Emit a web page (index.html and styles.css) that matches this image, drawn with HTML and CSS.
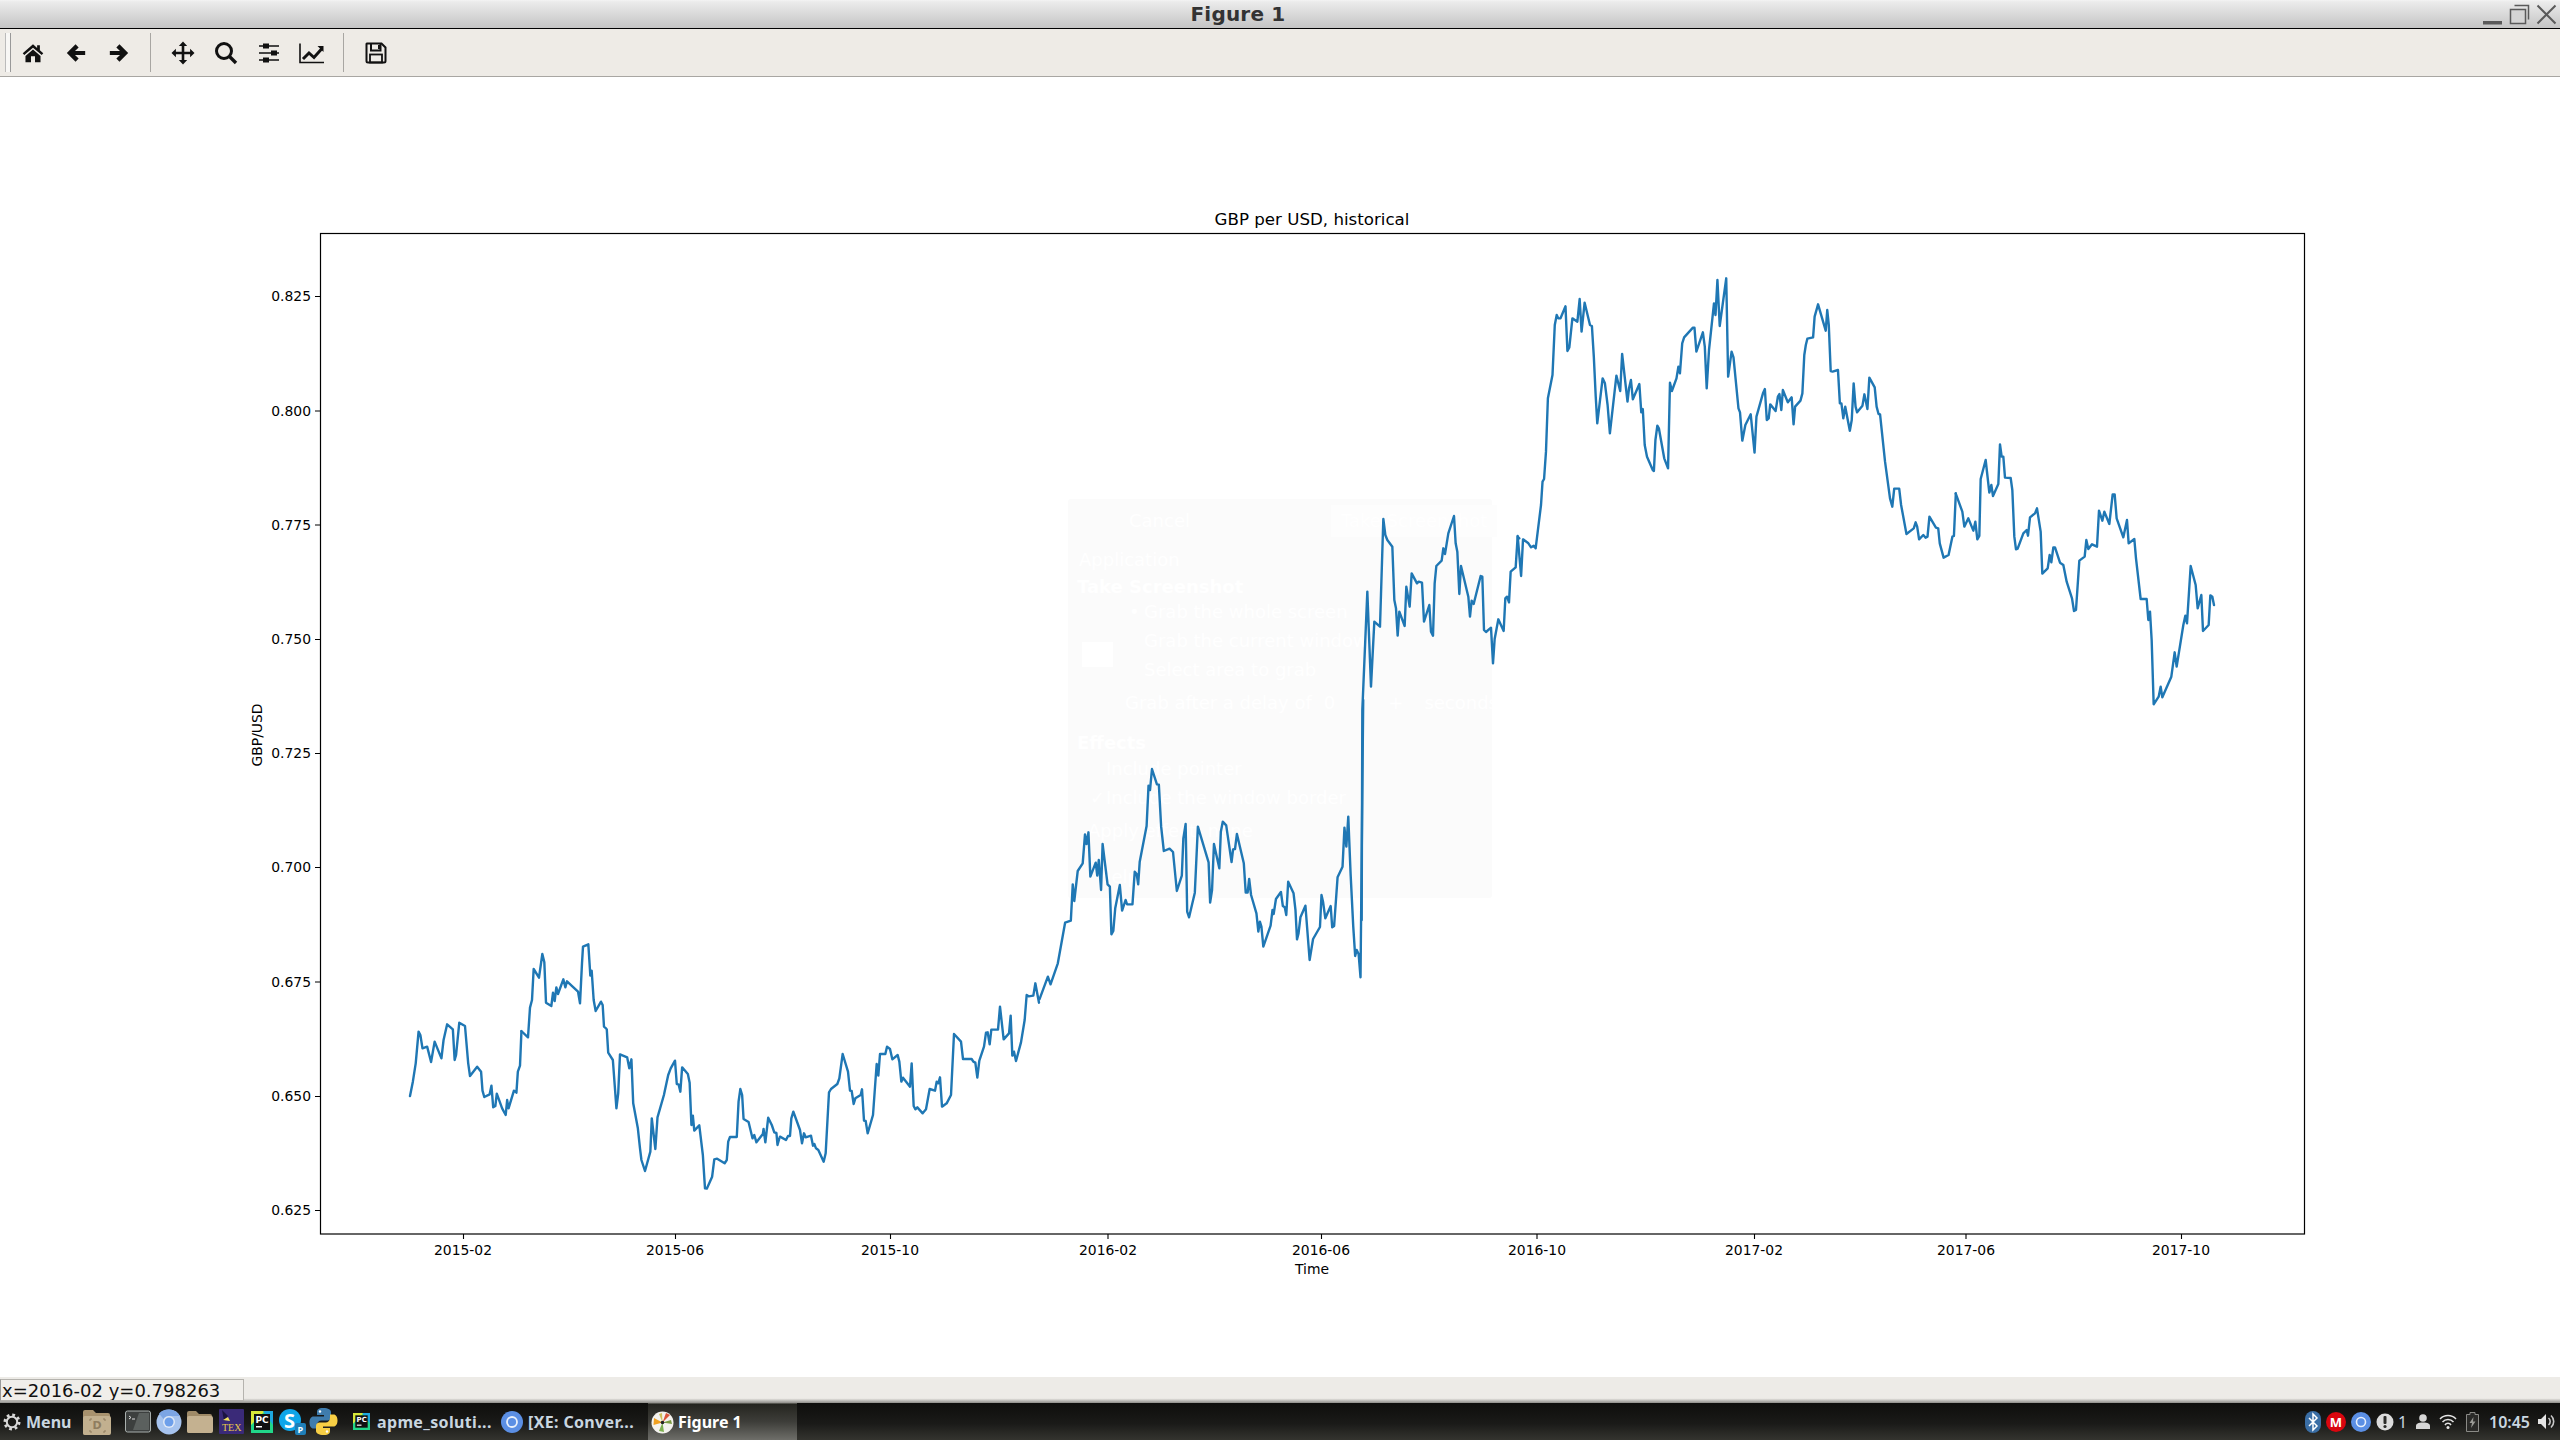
FILE: index.html
```html
<!DOCTYPE html>
<html lang="en">
<head>
<meta charset="utf-8">
<title>Figure 1</title>
<link rel="stylesheet" href="styles.css">
</head>
<body>
<div class="window">
  <header class="titlebar">
    <div class="title">Figure 1</div>
    <svg class="winbtns" width="84" height="28" viewBox="0 0 84 28">
      <rect x="7" y="21" width="19" height="3.5" fill="#5a5a5a"/>
      <path d="M38.5 5.5H52.5V19.5" class="wb"/>
      <rect x="34.5" y="9.5" width="15" height="14" class="wb wbf"/>
      <path d="M61.5 5.5L79.5 23.5M79.5 5.5L61.5 23.5" class="wb wbx"/>
    </svg>
  </header>

  <nav class="toolbar">
    <div class="handle"></div>
    <div class="tool"><svg width="22" height="22" viewBox="0 0 24 24"><path d="M12 2.5L.8 12.3l1.7 2L12 6.2l9.5 8.1 1.7-2-3.7-3.2V3.6h-3v3L12 2.5z"/><path d="M12 8.2L3.8 15.2V22h6v-6.5h4.4V22h6v-6.8L12 8.2z"/></svg></div>
    <div class="tool"><svg width="22" height="22" viewBox="0 0 24 24"><path d="M2 12L11.5 2.5l3.4 3.4-4 4H22v4.2H10.9l4 4-3.4 3.4L2 12z"/></svg></div>
    <div class="tool"><svg width="22" height="22" viewBox="0 0 24 24"><path d="M22 12L12.5 2.5 9.1 5.9l4 4H2v4.2h11.1l-4 4 3.4 3.4L22 12z"/></svg></div>
    <div class="sep"></div>
    <div class="tool"><svg width="24" height="24" viewBox="0 0 24 24"><path d="M12 .5l4.2 4.4h-2.9v5.8h5.8V7.800l4.400 4.200-4.400 4.200v-2.900h-5.800v5.800h2.900L12 23.500l-4.200-4.400h2.900v-5.800H4.900v2.900L.5 12l4.400-4.200v2.900h5.800V4.900H7.800L12 .5z"/></svg></div>
    <div class="tool"><svg width="24" height="24" viewBox="0 0 24 24"><circle cx="10" cy="10" r="7.500" fill="none" stroke="#111" stroke-width="3"/><path d="M15.500 15.500L22 22" stroke="#111" stroke-width="3.400" fill="none"/></svg></div>
    <div class="tool"><svg width="24" height="24" viewBox="0 0 24 24"><path d="M2 5h20M2 12h20M2 19h20" stroke="#111" stroke-width="1.600" fill="none"/><rect x="6" y="2.500" width="6" height="5"/><rect x="14" y="9.500" width="6" height="5"/><rect x="6" y="16.500" width="6" height="5"/></svg></div>
    <div class="tool"><svg width="26" height="24" viewBox="0 0 26 24"><path d="M1 2.500V21.500H25" stroke="#111" stroke-width="1.600" fill="none"/><path d="M4 18l6-6 5 4.500 8-9" stroke="#111" stroke-width="3" fill="none"/><path d="M18.500 5h6v6z"/></svg></div>
    <div class="sep"></div>
    <div class="tool"><svg width="22" height="22" viewBox="0 0 22 22"><path d="M2 1.500H16.500L20.500 5.500V19a1.500 1.500 0 0 1-1.500 1.500H3A1.500 1.500 0 0 1 1.500 19V2z" fill="none" stroke="#111" stroke-width="2"/><path d="M6 2v6.500H15.500V2M14 3v4" fill="none" stroke="#111" stroke-width="2"/><rect x="5" y="12.500" width="12" height="8" fill="none" stroke="#111" stroke-width="1.800"/></svg></div>
  </nav>

  <main class="figure">
    <section class="ghost">
      <div class="ghost-row ghost-actions"><span class="gh-cancel">Cancel</span><span class="gh-primary">Take Screenshot</span></div>
      <div class="ghost-row ghost-app">Application</div>
      <div class="ghost-row ghost-head">Take Screenshot</div>
      <div class="ghost-row ghost-opt"><span class="gh-mark">•</span>Grab the whole screen</div>
      <div class="ghost-row ghost-opt"><span class="gh-mark"></span>Grab the current window</div>
      <div class="ghost-row ghost-opt"><span class="gh-mark"></span>Select area to grab</div>
      <div class="ghost-row ghost-delay"><span>Grab after a delay of</span><span class="gh-zero">0</span><span class="gh-plus">+</span><span>seconds</span></div>
      <div class="ghost-row ghost-head">Effects</div>
      <div class="ghost-row ghost-check"><span class="gh-tick"></span>Include pointer</div>
      <div class="ghost-row ghost-check"><span class="gh-tick">✓</span>Include the window border</div>
      <div class="ghost-row ghost-apply">Apply effect: none</div>
      <div class="ghost-row ghost-help">Help</div>
      <div class="ghost-icon"></div>
    </section>
    <svg class="plot" width="2560" height="1300" viewBox="0 77 2560 1300">
      <g class="tick">
        <path d="M320 1210.500h-5M320 1096.500h-5M320 982h-5M320 867.500h-5M320 753.500h-5M320 639.500h-5M320 525h-5M320 411h-5M320 296.500h-5"/>
        <path d="M463.500 1234v5M675.500 1234v5M890.500 1234v5M1108 1234v5M1321.500 1234v5M1537 1234v5M1754.500 1234v5M1966 1234v5M2181.500 1234v5"/>
      </g>
      <g class="ylab">
        <text x="311" y="1215">0.625</text>
        <text x="311" y="1101">0.650</text>
        <text x="311" y="987">0.675</text>
        <text x="311" y="872">0.700</text>
        <text x="311" y="758">0.725</text>
        <text x="311" y="644">0.750</text>
        <text x="311" y="530">0.775</text>
        <text x="311" y="416">0.800</text>
        <text x="311" y="301">0.825</text>
      </g>
      <g class="xlab">
        <text x="463" y="1255">2015-02</text>
        <text x="675" y="1255">2015-06</text>
        <text x="890" y="1255">2015-10</text>
        <text x="1108" y="1255">2016-02</text>
        <text x="1321" y="1255">2016-06</text>
        <text x="1537" y="1255">2016-10</text>
        <text x="1754" y="1255">2017-02</text>
        <text x="1966" y="1255">2017-06</text>
        <text x="2181" y="1255">2017-10</text>
        <text x="1312" y="1274">Time</text>
      </g>
      <text class="ptitle" x="1312" y="224.500">GBP per USD, historical</text>
      <text class="ylabel" transform="translate(262 735) rotate(-90)">GBP/USD</text>
      <g class="curve">
        <g transform="translate(220 1000) scale(.35714 .33333)"><polyline points="532,288 540,245 548,190 556,95 561,105 567,145 580,140 591,186 601,125 620,175 626,120 636,73 652,88 657,180 661,165 670,68 686,78 695,190 700,228 720,200 731,215 735,272 740,291 755,283 760,257 765,322 771,318 775,281 790,325 800,345 804,300 808,325 823,272 830,278 834,215 840,197 844,94"/></g>
        <g transform="translate(500 930) scale(.33333)"><polyline points="64,303 84,322 90,233 96,210 101,117 117,143 127,72 133,97 138,218 154,228 159,188 164,213 169,172 174,192 190,148 196,172 201,154 234,185 240,220 246,100 249,50 265,43 271,137 275,122 281,210 287,243 303,215 308,225 312,290 318,295"/></g>
        <g transform="translate(220 1000) scale(.35714 .33333)"><polyline points="1083,88 1087,158 1100,180 1110,325 1115,280 1120,163 1140,172 1146,205 1152,178 1157,310 1170,385 1176,445 1180,480 1190,513 1205,455 1209,355 1219,447 1225,352 1243,285 1255,225 1262,205 1274,182 1279,252 1284,253 1289,275 1294,202 1310,222 1315,248 1320,375 1324,347 1328,392 1342,376 1352,465 1358,565 1363,566 1378,530 1384,478 1392,476 1413,490 1419,480 1423,425 1428,411 1447,411 1452,305 1457,267 1462,285 1466,357 1480,366 1491,415 1496,405 1502,427 1520,402 1522,387 1527,427 1535,353 1545,375 1552,397 1558,399 1561,435 1566,415"/></g>
        <g transform="translate(780 980) scale(.33333)"><polyline points="0,470 18,480 24,468 30,468 34,415 40,395 60,450 66,490 72,460 77,472 93,467 99,497 103,492 108,505 115,510 131,545 137,520 147,337 153,327 172,312 178,295 188,222 204,275 210,332 215,333 221,372 226,355 242,345 246,328 252,422 257,423 263,460 279,405 290,252 295,287 300,222 316,222 321,200 330,207 337,238 353,225 358,245 364,305 369,293 390,320 395,250 401,378 406,388 412,382 428,400 438,388 449,327 465,332 470,305 475,310 480,292 486,380 500,370 513,345 522,162 543,185 549,237 575,237 580,245 586,248 592,293 598,242 612,200 618,158 623,157 629,193 634,149 654,149 660,80 671,178 687,160 692,107 697,227 702,215 708,243 723,187 734,120 740,45 746,49 760,47 766,10 777,68"/></g>
        <g transform="translate(780 700) scale(.38268 .33333)"><polyline points="678,898 700,830 707,853 726,790 745,668 760,662 765,553 769,603 778,513 791,490 797,403 801,432 806,397 811,530 825,488 829,527 833,480 839,570 843,432 856,553 862,560 866,703 871,693 876,625 888,555 894,632 903,600 907,613 921,613 927,515 932,522 936,553 940,485 958,378 963,257 967,270 972,207 985,253 990,254 996,380 1003,453 1018,446 1027,456 1037,573 1050,527 1054,415 1060,372 1064,635 1069,652 1084,578 1092,380 1120,487 1124,608 1129,570 1134,432 1148,505 1152,395 1157,365 1166,376 1180,486 1184,448 1189,447 1194,402 1212,490 1217,578 1222,578 1226,537 1231,585 1245,640 1250,695 1254,665 1258,680 1263,740 1282,677 1287,630 1290,642 1296,597 1309,576 1314,618 1319,622 1323,645 1328,545 1342,580 1347,630 1351,718 1355,700 1360,652 1373,617 1384,780 1393,717 1411,681 1415,585 1419,605 1425,655 1439,618 1443,682 1448,678 1457,532 1470,500 1475,383 1480,440 1485,350 1491,520 1498,680 1503,768 1507,750 1512,762 1517,832 1524,0"/></g>
        <g transform="translate(1050 480) scale(.33333)"><polyline points="935,1320 937,690 952,335 963,620 973,425 990,440 1000,117 1006,165 1012,180 1027,200 1033,360 1038,385 1043,467 1048,395 1064,438 1069,320 1079,380 1085,280 1101,310 1106,305 1116,308 1122,425 1138,375 1143,455 1149,467 1154,310 1159,258 1175,242 1180,205 1185,222 1195,160 1212,108 1217,190 1222,215 1228,342 1233,258 1255,350 1260,410 1265,362 1271,372 1292,288 1297,290 1302,450 1308,456 1323,443 1329,550 1334,477 1345,418 1361,453 1366,355 1371,350 1377,367 1382,275 1397,262 1403,170 1408,175"/></g>
        <g transform="translate(1360 260) scale(.38268 .33333)"><polyline points="412,828 421,948 426,838 440,850 447,862 454,857 459,865 473,735 477,665 481,657 486,575 491,415 503,345 509,195 514,165 518,175 524,175 537,139 542,273 547,262 555,175 568,185 574,117 579,215 587,128 601,195 606,198 611,290 616,410 620,490 634,355 640,370 647,435 653,520 670,347 680,393 685,282 699,425 703,385 708,360 713,418 730,372 735,457 739,447 744,555 750,590 765,630 768,633 772,540 777,497 781,505 795,595 805,625 810,368 815,393 827,355 832,320 836,340 842,250 847,232 870,203 874,203 879,275 896,217 901,260 906,385 912,270 925,130 929,165 934,60 940,198 957,55 962,350 971,275 976,292 989,445 993,457 999,542 1007,495 1021,463 1031,578 1036,470 1053,400 1058,387 1063,480 1068,475 1072,433 1086,453 1092,410 1096,402 1101,450 1105,390 1118,427 1128,412 1133,493 1137,440 1151,422 1156,400 1161,285 1165,255 1169,236 1184,232 1188,170 1197,133 1217,212 1221,150 1225,195 1230,333 1235,335 1249,330 1254,430 1258,430 1263,475 1268,440 1280,512 1285,480 1290,370 1295,440 1299,457 1313,437 1318,403 1326,447 1331,353 1345,382 1350,440 1355,462 1359,463 1372,605 1385,715 1391,740 1396,686 1409,686 1414,735 1428,822 1447,805 1452,787 1456,800 1461,838 1472,825 1478,833 1483,830 1488,770 1505,803 1511,805 1515,850 1525,893 1538,885 1548,830 1552,828 1557,700"/></g>
        <g transform="translate(1800 260) scale(.33333)"><polyline points="467,700 487,755 493,800 505,775 520,812 526,785 532,838 538,828 542,657 557,600 568,698 574,675 579,708 595,672 600,553 605,590 610,590 615,653 632,654 637,690 643,830 648,868 653,866 670,820 680,810 684,827 690,772 705,760 711,745 722,815 727,941 743,925 749,885 754,907 760,862 765,862 780,908 790,915 800,965 816,1015 822,1053 828,1050 838,902 854,890 859,840 865,867 876,853 891,860 897,752 907,782 913,755 928,792 938,703 944,703 950,775 970,832 981,780 986,850 1003,837 1008,895 1022,1017 1040,1017 1045,1080 1050,1055 1055,1140 1061,1333 1076,1310 1082,1280 1087,1312 1114,1250 1124,1177 1130,1220 1150,1095 1156,1067 1161,1090 1172,918 1187,975 1193,1045 1204,1005 1209,1113 1226,1095 1231,1006 1237,1010 1242,1035"/></g>
      </g>
      <rect class="spine" x="320.500" y="233.500" width="1984" height="1000.500"/>
    </svg>
  </main>

  <div class="statusbar"><div class="coords">x=2016-02 y=0.798263</div></div>

  <footer class="taskbar">
    <div class="menu">
      <svg width="18" height="18" viewBox="0 0 18 18"><circle cx="9" cy="9" r="5.200" fill="none" stroke="#d8d8d8" stroke-width="2"/><circle cx="9" cy="9" r="7" fill="none" stroke="#d8d8d8" stroke-width="3" stroke-dasharray="2.700 2.800"/></svg>
      <span class="menu-text">Menu</span>
    </div>
    <div class="launchers">
      <svg class="l-folder" width="29" height="28" viewBox="0 0 29 28"><path d="M1 4q0-2 2-2h8l3 3h12q2 0 2 2v18q0 2-2 2H3q-2 0-2-2z" fill="#a8926e"/><rect x="1" y="8" width="28" height="19" rx="2" fill="#c2b08f"/><path d="M8 13v-2h2M21 11h2v2M8 22v2h2M21 24h2v-2" stroke="#8f7d5f" fill="none"/><text class="l-d" x="15" y="21">D</text></svg>
      <svg class="l-term" width="26" height="24" viewBox="0 0 26 24"><rect x=".5" y="1" width="25" height="21" rx="2" fill="#3c3f3e" stroke="#a9b0ae"/><path d="M14 3L24 3 24 20 8 20z" fill="#5b605e"/><path d="M4 6l2 1.500L4 9M7 9h3" stroke="#ddd" fill="none"/></svg>
      <svg class="l-chrome" width="26" height="26" viewBox="0 0 26 26"><circle cx="13" cy="13" r="12.500" fill="#a6c3ee"/><path d="M13 .5a12.500 12.500 0 0 1 11 6.500H13a6 6 0 0 0-5.500 3L3 4.500A12.500 12.500 0 0 1 13 .5z" fill="#7ca5e4"/><circle cx="13" cy="13" r="6" fill="#dfe8f6"/><circle cx="13" cy="13" r="4.500" fill="#6d9fea"/></svg>
      <svg class="l-folder2" width="27" height="24" viewBox="0 0 27 24"><path d="M1 3q0-2 2-2h7l3 3h11q2 0 2 2v15q0 2-2 2H3q-2 0-2-2z" fill="#9f8a67"/><rect x="1" y="6" width="26" height="17" rx="2" fill="#c4b190"/></svg>
      <svg class="l-tex" width="25" height="25" viewBox="0 0 25 25"><rect width="25" height="25" rx="1" fill="#3a2a78"/><path d="M3 1l6 6-4 5z" fill="#1b1440"/><path d="M4 11l5-3 2 4z" fill="#f0e060"/><text class="l-texlabel" x="3" y="22">TEX</text></svg>
      <svg class="l-pc" width="22" height="22" viewBox="0 0 22 22"><rect width="22" height="22" fill="#21d789"/><path d="M0 0h14L0 14z" fill="#d7e93a"/><path d="M22 0v14L12 0z" fill="#1ea8e0"/><rect x="3" y="3" width="16" height="16" fill="#111"/><text class="l-pclabel" x="4.500" y="12">PC</text><rect x="5" y="15" width="6" height="1.500" fill="#fff"/></svg>
      <svg class="l-skype" width="28" height="28" viewBox="0 0 28 28"><circle cx="11" cy="12" r="11" fill="#0ea5e9"/><text class="l-s" x="5" y="20">S</text><rect x="16" y="15" width="11" height="12" rx="2" fill="#1f7fb8"/><text class="l-p" x="18.500" y="25">P</text></svg>
      <svg class="l-py" width="29" height="29" viewBox="0 0 29 29"><path d="M14.200 1C9 1 8 3 8 5v3h7v1.500H4.500C2 9.500.5 12 .5 15.500s1.500 6 4 6H8v-3.500c0-2.500 2-4.500 4.500-4.500h6c2 0 3.500-1.500 3.500-3.500V5c0-2-2.500-4-7.800-4z" fill="#3f7cad"/><path d="M14.800 28c5.200 0 6.200-2 6.200-4v-3h-7v-1.500h10.500c2.500 0 4-2.500 4-6s-1.500-6-4-6H21V11c0 2.500-2 4.500-4.500 4.500h-6C8.500 15.500 7 17 7 19v5c0 2 2.500 4 7.800 4z" fill="#f7cf45"/><circle cx="11" cy="4.500" r="1.200" fill="#fff"/><circle cx="18" cy="24.500" r="1.200" fill="#fff"/></svg>
    </div>
    <div class="task task-a">
      <svg width="17" height="17" viewBox="0 0 22 22"><rect width="22" height="22" fill="#21d789"/><path d="M0 0h14L0 14z" fill="#d7e93a"/><path d="M22 0v14L12 0z" fill="#1ea8e0"/><rect x="3" y="3" width="16" height="16" fill="#111"/><text class="l-pclabel" x="4.500" y="12">PC</text><rect x="5" y="15" width="6" height="1.500" fill="#fff"/></svg>
      <span>apme_soluti...</span>
    </div>
    <div class="task task-b">
      <svg width="22" height="22" viewBox="0 0 22 22"><circle cx="11" cy="11" r="11" fill="#5b8fe4"/><circle cx="11" cy="11" r="5" fill="none" stroke="#e8f0fb" stroke-width="1.800"/></svg>
      <span>[XE: Conver...</span>
    </div>
    <div class="task task-c">
      <svg width="23" height="23" viewBox="0 0 23 23"><circle cx="11.500" cy="11.500" r="11" fill="#f4f2ee"/><path d="M11.500 11.500L3 7 2.500 14z" fill="#f0a020"/><path d="M11.500 11.500L15 2l4 2z" fill="#d9553a"/><path d="M11.500 11.500L20 9l1 4z" fill="#7a9a40"/><path d="M11.500 11.500L8 20l5 1z" fill="#7db050"/><path d="M11.500 11.500L8 3l3-1z" fill="#cfc05a"/><circle cx="11.500" cy="11.500" r="1.800" fill="#222"/></svg>
      <span>Figure 1</span>
    </div>
    <div class="tray">
      <svg class="t-bt" width="16" height="22" viewBox="0 0 16 22"><rect width="16" height="22" rx="8" fill="#3a6ea5"/><path d="M4 7l8 8-4 4V3l4 4-8 8" fill="none" stroke="#fff" stroke-width="1.500"/></svg>
      <svg class="t-m" width="20" height="20" viewBox="0 0 20 20"><circle cx="10" cy="10" r="10" fill="#d9060f"/><text class="t-mlabel" x="10" y="14.500">M</text></svg>
      <svg class="t-ch" width="20" height="20" viewBox="0 0 20 20"><circle cx="10" cy="10" r="10" fill="#5b8fe4"/><circle cx="10" cy="10" r="4.500" fill="none" stroke="#e8f0fb" stroke-width="1.600"/></svg>
      <svg class="t-ex" width="18" height="18" viewBox="0 0 18 18"><circle cx="9" cy="9" r="8.500" fill="#dcdcdc"/><rect x="7.500" y="3" width="3" height="8" rx="1" fill="#2a2a28"/><circle cx="9" cy="13.500" r="1.600" fill="#2a2a28"/></svg>
      <span class="t-one">1</span>
      <svg class="t-user" width="14" height="15" viewBox="0 0 14 15"><circle cx="7" cy="4" r="3.800" fill="#d6d6d6"/><path d="M0 15v-3c0-2 2-3.500 7-3.500s7 1.500 7 3.500v3z" fill="#d6d6d6"/></svg>
      <svg class="t-wifi" width="18" height="15" viewBox="0 0 18 15"><path d="M1 5a11 11 0 0 1 16 0M3.500 8a7.500 7.500 0 0 1 11 0M6 11a3.500 3.500 0 0 1 6 0" fill="none" stroke="#e4e4e4" stroke-width="1.500"/><circle cx="9" cy="13.500" r="1.500" fill="#e4e4e4"/></svg>
      <svg class="t-bat" width="13" height="20" viewBox="0 0 13 20"><path d="M4 .5h5v2h3.500v17H.5v-17H4z" fill="#2a2a28" stroke="#8a8a86"/><path d="M7.500 5L3.500 11h2.500L5 16l4.500-6.500H7z" fill="#9a9a96"/></svg>
      <span class="t-clock">10:45</span>
      <svg class="t-vol" width="19" height="17" viewBox="0 0 19 17"><path d="M0 6h3l5-5v15l-5-5H0z" fill="#e4e4e4"/><path d="M10.500 5a4.500 4.500 0 0 1 0 7M13 2.500a8 8 0 0 1 0 12" fill="none" stroke="#c8c8c8" stroke-width="1.600"/></svg>
    </div>
  </footer>
</div>
</body>
</html>
```
FILE: styles.css
```css
html, body { margin: 0; padding: 0; background: #fff; }
.window { width: 2560px; height: 1440px; display: flex; flex-direction: column; overflow: hidden; font-family: "DejaVu Sans", sans-serif; }

.titlebar { height: 28px; flex: none; display: flex; align-items: center; border-bottom: 1px solid #000; border-top: 0; background: linear-gradient(#f4f4f4 0, #ebebeb 2px, #c4c4c4 100%); }
.title { flex: 1; text-align: center; font-size: 20px; font-weight: 700; color: #333; letter-spacing: .2px; }
.winbtns { flex: none; display: block; }
.wb { fill: none; stroke: #5a5a5a; stroke-width: 1.500; }
.wbf { fill: #d4d4d4; }
.wbx { stroke-width: 2; }

.toolbar { height: 47px; flex: none; display: flex; align-items: center; background: #eeebe6; border-bottom: 1px solid #a8a6a2; padding-left: 5px; box-sizing: content-box; }
.handle { width: 4px; height: 39px; border-left: 1px solid #bbb; border-right: 1px solid #999; background: #f8f7f5; }
.tool { width: 43px; height: 40px; display: flex; align-items: center; justify-content: center; }
.tool svg { display: block; fill: #111; }
.sep { width: 1px; height: 39px; background: #a8a6a2; margin: 0 10px; }

.figure { flex: 1; position: relative; background: #fff; min-height: 0; }
.plot { display: block; position: relative; }
.spine { fill: none; stroke: #000; stroke-width: 1.200; }
.tick path { stroke: #000; stroke-width: 1.100; fill: none; }
.ylab text, .xlab text, .ylabel { font-size: 13.900px; fill: #000; }
.ylab text { text-anchor: end; }
.xlab text, .ylabel, .ptitle { text-anchor: middle; }
.ptitle { font-size: 16.670px; fill: #000; }
.curve polyline { fill: none; stroke: #1f77b4; stroke-width: 2.400; stroke-linejoin: round; stroke-linecap: round; vector-effect: non-scaling-stroke; }

.ghost { position: absolute; left: 1068px; top: 422px; width: 424px; height: 399px; box-sizing: border-box; padding-top: 10px; background: #fbfbfb; border-radius: 3px; color: #fff; font-size: 18px; line-height: 24px; display: grid; grid-template-rows: 39px 27px 25px 29px 29px 33px 40px 26px 29px 33px 46px 24px; }
.ghost-row { white-space: nowrap; height: 24px; }
.ghost-actions { display: flex; padding-left: 61px; }
.gh-primary { margin-left: 141px; background: #fdfdfd; padding: 0 10px; margin-top: -4px; padding-top: 4px; height: 28px; }
.ghost-app { padding-left: 11px; }
.ghost-head { padding-left: 9px; font-weight: 700; }
.ghost-opt { display: flex; padding-left: 61px; }
.gh-mark { width: 15px; flex: none; }
.ghost-delay { display: flex; padding-left: 57px; }
.gh-zero { margin-left: 12px; }
.gh-plus { margin-left: 53px; margin-right: 21px; }
.ghost-check { display: flex; padding-left: 22px; }
.gh-tick { width: 16px; flex: none; }
.ghost-apply { padding-left: 20px; }
.ghost-help { padding-left: 30px; }
.ghost-icon { position: absolute; left: 14px; top: 143px; width: 31px; height: 25px; background: #fff; }

.statusbar { height: 26px; flex: none; background: linear-gradient(#edebe7 0, #edebe7 82%, #8e8d89 100%); box-sizing: border-box; padding-top: 2px; }
.coords { width: 244px; height: 22px; box-sizing: border-box; border: 1px solid #b5b3ae; border-left-color: #999; font-size: 18px; line-height: 21px; padding-left: 1px; color: #111; background: #f0eeea; white-space: nowrap; overflow: hidden; }

.taskbar { height: 37px; flex: none; display: flex; align-items: center; background: linear-gradient(#0e0e0c 0, #1a1a18 55%, #34342f 100%); font-family: "Noto Sans", sans-serif; font-weight: 700; font-size: 16px; color: #c9d6e0; }
.taskbar svg { display: block; flex: none; }
.menu { width: 79px; padding-left: 3px; flex: none; display: flex; align-items: center; gap: 5px; }
.launchers { width: 266px; flex: none; display: flex; align-items: center; }
.l-term { margin-left: 14px; }
.l-chrome { margin-left: 5px; }
.l-folder2 { margin-left: 4px; }
.l-tex { margin-left: 6px; }
.l-pc { margin-left: 7px; }
.l-skype { margin-left: 6px; }
.l-py { margin-left: 2px; }
.l-d { font: 700 11px "DejaVu Sans", sans-serif; fill: #8f7d5f; text-anchor: middle; }
.l-texlabel { font: 400 10px "Liberation Serif", serif; fill: #e8c84a; }
.l-pclabel { font: 700 9px "DejaVu Sans", sans-serif; fill: #fff; }
.l-s { font: 700 20px "Noto Sans", sans-serif; fill: #fff; }
.l-p { font: 700 9px "Noto Sans", sans-serif; fill: #fff; }
.task { height: 37px; flex: none; display: flex; align-items: center; box-sizing: border-box; white-space: nowrap; }
.task-a { width: 150px; padding-left: 5px; gap: 7px; letter-spacing: .35px; }
.task-b { width: 150px; padding-left: 3px; gap: 5px; letter-spacing: .35px; }
.task-c { width: 149px; padding-left: 3px; gap: 4px; color: #fff; background: linear-gradient(#24241f 0, #3e3e3a 50%, #6e6e69 100%); border-top: 1px solid #55554f; }
.tray { margin-left: auto; display: flex; align-items: center; padding-right: 3px; }
.t-m { margin-left: 5px; }
.t-mlabel { font: 700 13px "Noto Sans", sans-serif; fill: #fff; text-anchor: middle; }
.t-ch { margin-left: 5px; }
.t-ex { margin-left: 5px; }
.t-one { margin-left: 4px; width: 7px; font-weight: 400; }
.t-user { margin-left: 11px; }
.t-wifi { margin-left: 9px; }
.t-bat { margin-left: 9px; }
.t-clock { margin-left: 10px; width: 42px; font-weight: 600; }
.t-vol { margin-left: 7px; }
```
